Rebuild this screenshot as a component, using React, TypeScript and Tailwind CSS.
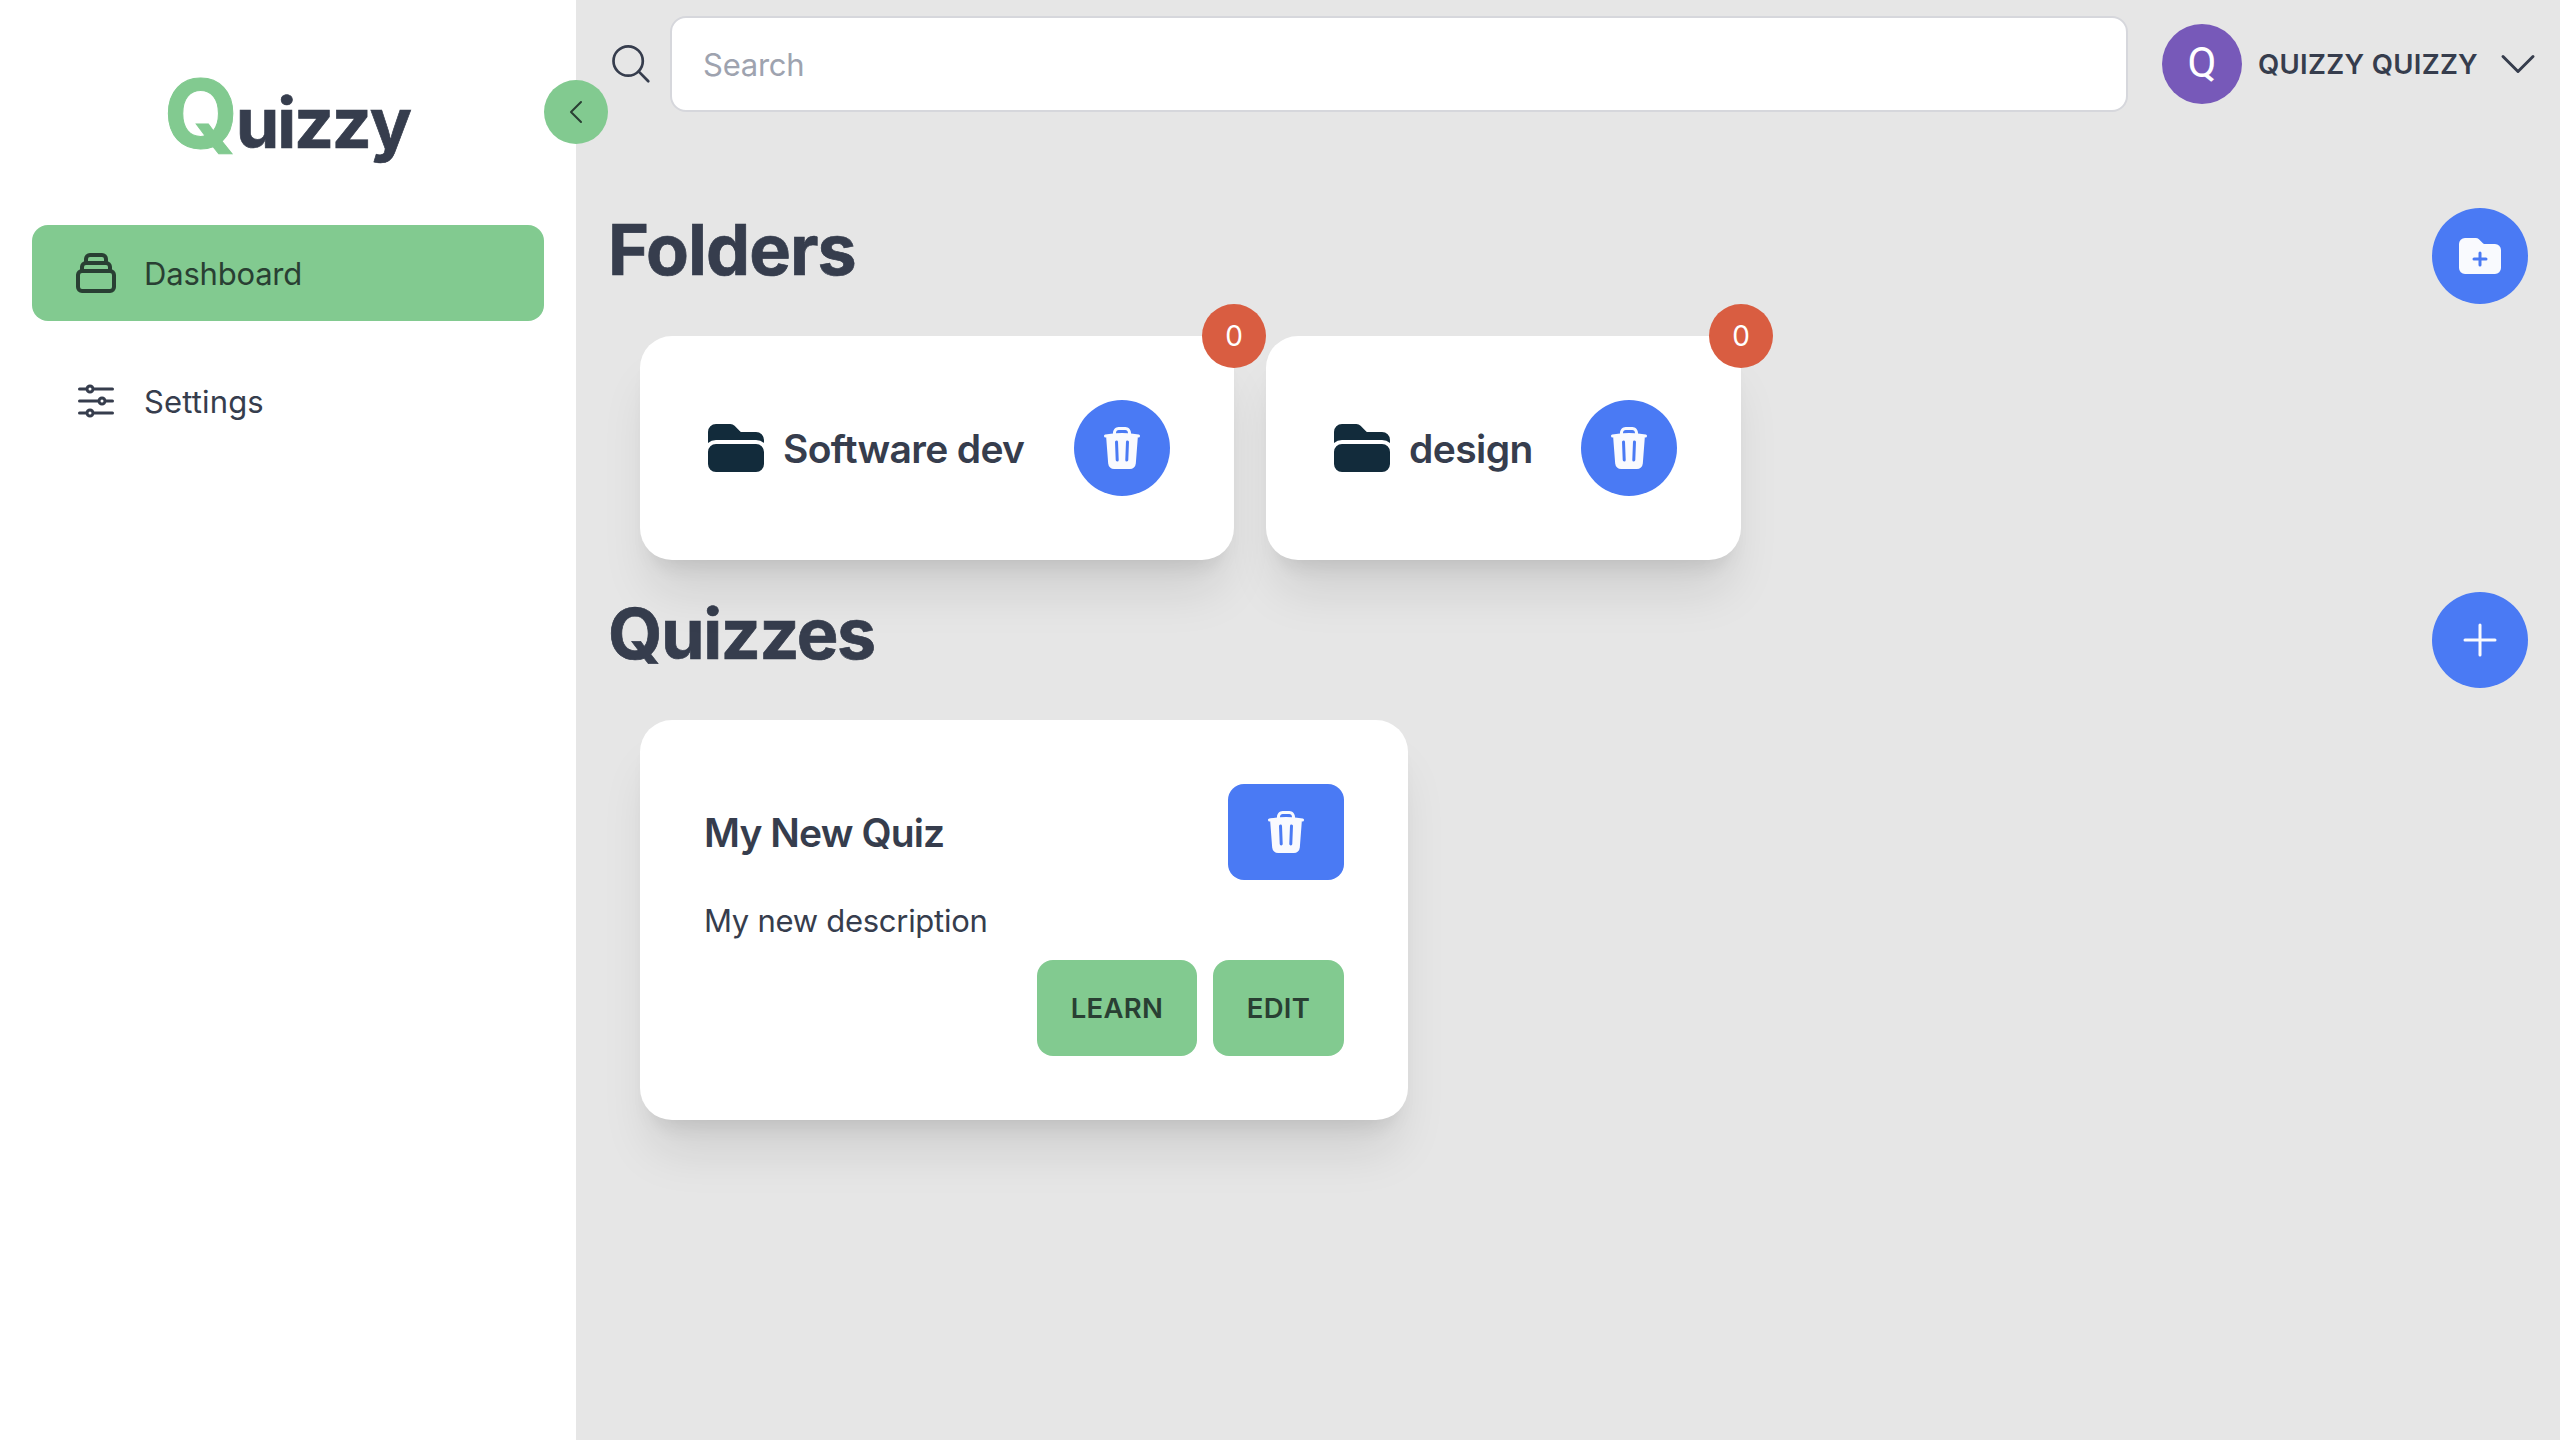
import React from "react";
import {
  HiFolder,
  HiFolderPlus,
  HiTrash,
  HiOutlineAdjustmentsHorizontal,
  HiOutlineChevronLeft,
  HiOutlineChevronDown,
  HiOutlinePlus,
} from "react-icons/hi2";
import { HiOutlineCollection } from "react-icons/hi";

const folders = [
  { name: "Software dev", count: 0, width: "w-[594px]", tracking: "tracking-[-0.68px]" },
  { name: "design", count: 0, width: "w-[475px]", tracking: "tracking-[-0.6px]" },
];

const cardShadow =
  "shadow-[0_40px_50px_-10px_rgba(0,0,0,0.1),0_16px_20px_-12px_rgba(0,0,0,0.1)]";

function SearchIcon() {
  return (
    <svg viewBox="0 0 48 48" className="size-12 shrink-0" fill="none" stroke="currentColor" strokeWidth={2.7} strokeLinecap="round">
      <circle cx="20.15" cy="21" r="14.65" />
      <path d="M30.6 31.4 40.3 41.3" />
    </svg>
  );
}

function Sidebar() {
  return (
    <aside className="relative flex w-[576px] shrink-0 flex-col bg-white px-8">
      <div className="flex h-[161px] items-baseline pt-[66px] pl-[132px] font-bold">
        <span className="-mr-[2px] text-[95px] leading-none text-[#82ca90] [-webkit-text-stroke:1px_#82ca90]">Q</span>
        <span className="text-[70px] leading-none tracking-[-2.2px] [-webkit-text-stroke:0.7px_#363d4d]">uizzy</span>
      </div>
      <nav className="mt-16 flex flex-col gap-8 text-[31px]">
        <a className="flex h-24 items-center gap-6 rounded-2xl bg-[#82ca90] px-10 text-[#293f33]">
          <HiOutlineCollection className="size-12" />
          <span className="pt-0.5 tracking-[-0.2px]">Dashboard</span>
        </a>
        <a className="flex h-24 items-center gap-6 rounded-2xl px-10">
          <HiOutlineAdjustmentsHorizontal className="size-12" />
          <span className="pt-0.5 tracking-[0.15px]">Settings</span>
        </a>
      </nav>
      <button className="absolute top-20 -right-8 flex size-16 items-center justify-center rounded-full bg-[#82ca90] text-[#293f33]">
        <HiOutlineChevronLeft className="size-8" />
      </button>
    </aside>
  );
}

function Header() {
  return (
    <header className="flex h-32 items-center pl-8">
      <SearchIcon />
      <input
        placeholder="Search"
        className="ml-[14px] h-24 w-[1458px] rounded-2xl border-2 border-[#d6d7dc] bg-white px-[31px] text-[31px] tracking-[-0.25px] placeholder:text-[#9ea3af]"
      />
      <div className="ml-[34px] flex size-20 items-center justify-center rounded-full bg-[#7759b9] font-[Roboto] text-[42px] leading-none text-white">
        <span className="-mt-0.5">Q</span>
      </div>
      <span className="ml-4 pt-0.5 text-[27.5px] font-semibold tracking-[0.3px]">QUIZZY QUIZZY</span>
      <HiOutlineChevronDown className="mr-[18px] ml-auto size-12" />
    </header>
  );
}

function SectionTitle({ title, tracking, children }: { title: string; tracking: string; children: React.ReactNode }) {
  return (
    <div className="flex h-24 items-start justify-between">
      <h2 className={`text-[70px] leading-[83px] font-bold [-webkit-text-stroke:0.7px_#363d4d] ${tracking}`}>{title}</h2>
      <button className="flex size-24 items-center justify-center rounded-full bg-[#4a7af4] text-[#f9fafe]">
        {children}
      </button>
    </div>
  );
}

export default function App() {
  return (
    <div className="flex h-[1440px] w-[2560px] overflow-hidden bg-[#e6e6e6] font-[Inter,sans-serif] text-[#363d4d]">
      <Sidebar />
      <main className="flex flex-1 flex-col">
        <Header />
        <div className="flex flex-col gap-8 px-8 pt-20">
          <SectionTitle title="Folders" tracking="tracking-[-0.95px]">
            <HiFolderPlus className="size-12" />
          </SectionTitle>
          <div className="flex gap-8 pl-8">
            {folders.map((f) => (
              <div
                key={f.name}
                className={`relative flex h-56 items-center rounded-[32px] bg-white px-16 ${f.width} ${cardShadow}`}
              >
                <HiFolder className="size-16 shrink-0 text-[#122b3b]" />
                <h3 className={`ml-[15px] pt-0.5 text-[39px] font-semibold whitespace-nowrap ${f.tracking}`}>{f.name}</h3>
                <button className="ml-auto flex size-24 items-center justify-center rounded-full bg-[#4a7af4] text-[#f9fafe]">
                  <HiTrash className="size-12" />
                </button>
                <span className="absolute -top-8 -right-8 flex size-16 items-center justify-center rounded-full bg-[#d95d41] text-[28px] text-white">
                  {f.count}
                </span>
              </div>
            ))}
          </div>
          <SectionTitle title="Quizzes" tracking="tracking-[-1.4px]">
            <HiOutlinePlus className="size-12" />
          </SectionTitle>
          <div className="flex pl-8">
            <article className={`flex w-[768px] flex-col rounded-[32px] bg-white p-16 ${cardShadow}`}>
              <div className="flex items-center justify-between">
                <h3 className="pt-0.5 text-[39px] font-semibold tracking-[-0.9px]">My New Quiz</h3>
                <button className="flex h-24 w-[116px] items-center justify-center rounded-2xl bg-[#4a7af4] text-[#f9fafe]">
                  <HiTrash className="size-12" />
                </button>
              </div>
              <p className="mt-[17px] mb-[15px] text-[31px] leading-[48px] tracking-[-0.28px]">My new description</p>
              <div className="flex justify-end gap-4 text-[27.5px] font-semibold text-[#293f33]">
                <button className="h-24 w-40 rounded-2xl bg-[#82ca90] pt-0.5 tracking-[0.3px]">LEARN</button>
                <button className="h-24 w-[131px] rounded-2xl bg-[#82ca90] pt-0.5 tracking-[0.3px]">EDIT</button>
              </div>
            </article>
          </div>
        </div>
      </main>
    </div>
  );
}
